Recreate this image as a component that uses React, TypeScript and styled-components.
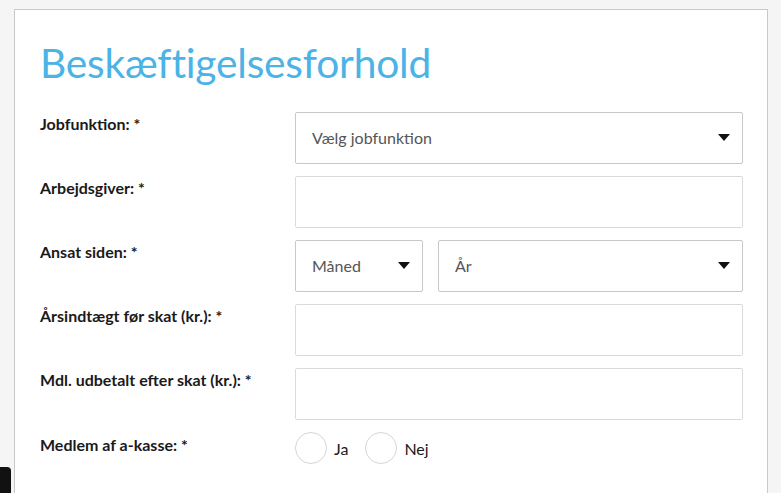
import React from "react";
import styled, { createGlobalStyle } from "styled-components";

const Global = createGlobalStyle`
  html, body { margin: 0; padding: 0; background: #f5f5f5; }
  body { font-family: Lato, "Open Sans", sans-serif; overflow: hidden; height: 493px; }
  * { box-sizing: border-box; }
`;

const Page = styled.div`
  padding: 9px 0 0 14px;
  height: 493px;
  overflow: hidden;
`;

const Card = styled.section`
  width: 754px;
  min-height: 520px;
  background: #fff;
  border: 1px solid #c9c9c9;
  border-bottom: none;
  padding: 25px 23px 0 25px;
`;

const Title = styled.h1`
  margin: 0 0 21px 0;
  font-family: Lato, sans-serif;
  font-weight: 400;
  font-size: 40.7px;
  line-height: 56px;
  color: #4bb3e6;
  letter-spacing: -0.2px;
`;

const Form = styled.div`
  display: grid;
  grid-template-columns: 255px 448px;
  row-gap: 12px;
`;

const Label = styled.div`
  font-size: 16px;
  font-weight: 700;
  color: #1a1a1a;
  padding-top: 2px;
  line-height: 20px;
`;

const Box = styled.div<{ $select?: boolean }>`
  height: 52px;
  border: 1px solid ${(p) => (p.$select ? "#c8c8c8" : "#dadada")};
  border-radius: 2px;
  background: #fff;
  display: flex;
  align-items: center;
  padding: 0 12px 1px 16px;
  font-size: 16px;
  color: #555;
  flex: 1;
`;

const SelectText = styled.span`
  flex: 1;
`;

const Caret = styled.span`
  width: 0;
  height: 0;
  border-left: 6px solid transparent;
  border-right: 6px solid transparent;
  border-top: 7px solid #111;
`;

const Pair = styled.div`
  display: flex;
  gap: 15px;
`;

const MonthBox = styled(Box)`
  flex: 0 0 128px;
  padding-right: 12px;
`;

const Radios = styled.div`
  display: flex;
  align-items: center;
  height: 32px;
`;

const Circle = styled.span`
  width: 32px;
  height: 32px;
  border-radius: 50%;
  border: 1px solid #d6d6d6;
  background: #fff;
  margin-right: 7px;
`;

const RadioText = styled.span`
  font-size: 16px;
  font-weight: 400;
  color: #1a1a1a;
  margin-right: 17px;
  padding-top: 1px;
`;

const RadioLabel = styled(Label)`
  padding-top: 3px;
`;

const Widget = styled.div`
  position: fixed;
  left: 0;
  top: 467px;
  width: 11px;
  height: 40px;
  background: #111;
  border-top-right-radius: 4px;
`;

const Select = ({ text, month }: { text: string; month?: boolean }) => {
  const C = month ? MonthBox : Box;
  return (
    <C $select>
      <SelectText>{text}</SelectText>
      <Caret />
    </C>
  );
};

export default function App() {
  return (
    <>
      <Global />
      <Page>
        <Card>
          <Title>Beskæftigelsesforhold</Title>
          <Form>
            <Label>Jobfunktion: *</Label>
            <Select text="Vælg jobfunktion" />
            <Label>Arbejdsgiver: *</Label>
            <Box />
            <Label>Ansat siden: *</Label>
            <Pair>
              <Select text="Måned" month />
              <Select text="År" />
            </Pair>
            <Label>Årsindtægt før skat (kr.): *</Label>
            <Box />
            <Label>Mdl. udbetalt efter skat (kr.): *</Label>
            <Box />
            <RadioLabel>Medlem af a-kasse: *</RadioLabel>
            <Radios>
              <Circle />
              <RadioText>Ja</RadioText>
              <Circle />
              <RadioText>Nej</RadioText>
            </Radios>
          </Form>
        </Card>
      </Page>
      <Widget />
    </>
  );
}
